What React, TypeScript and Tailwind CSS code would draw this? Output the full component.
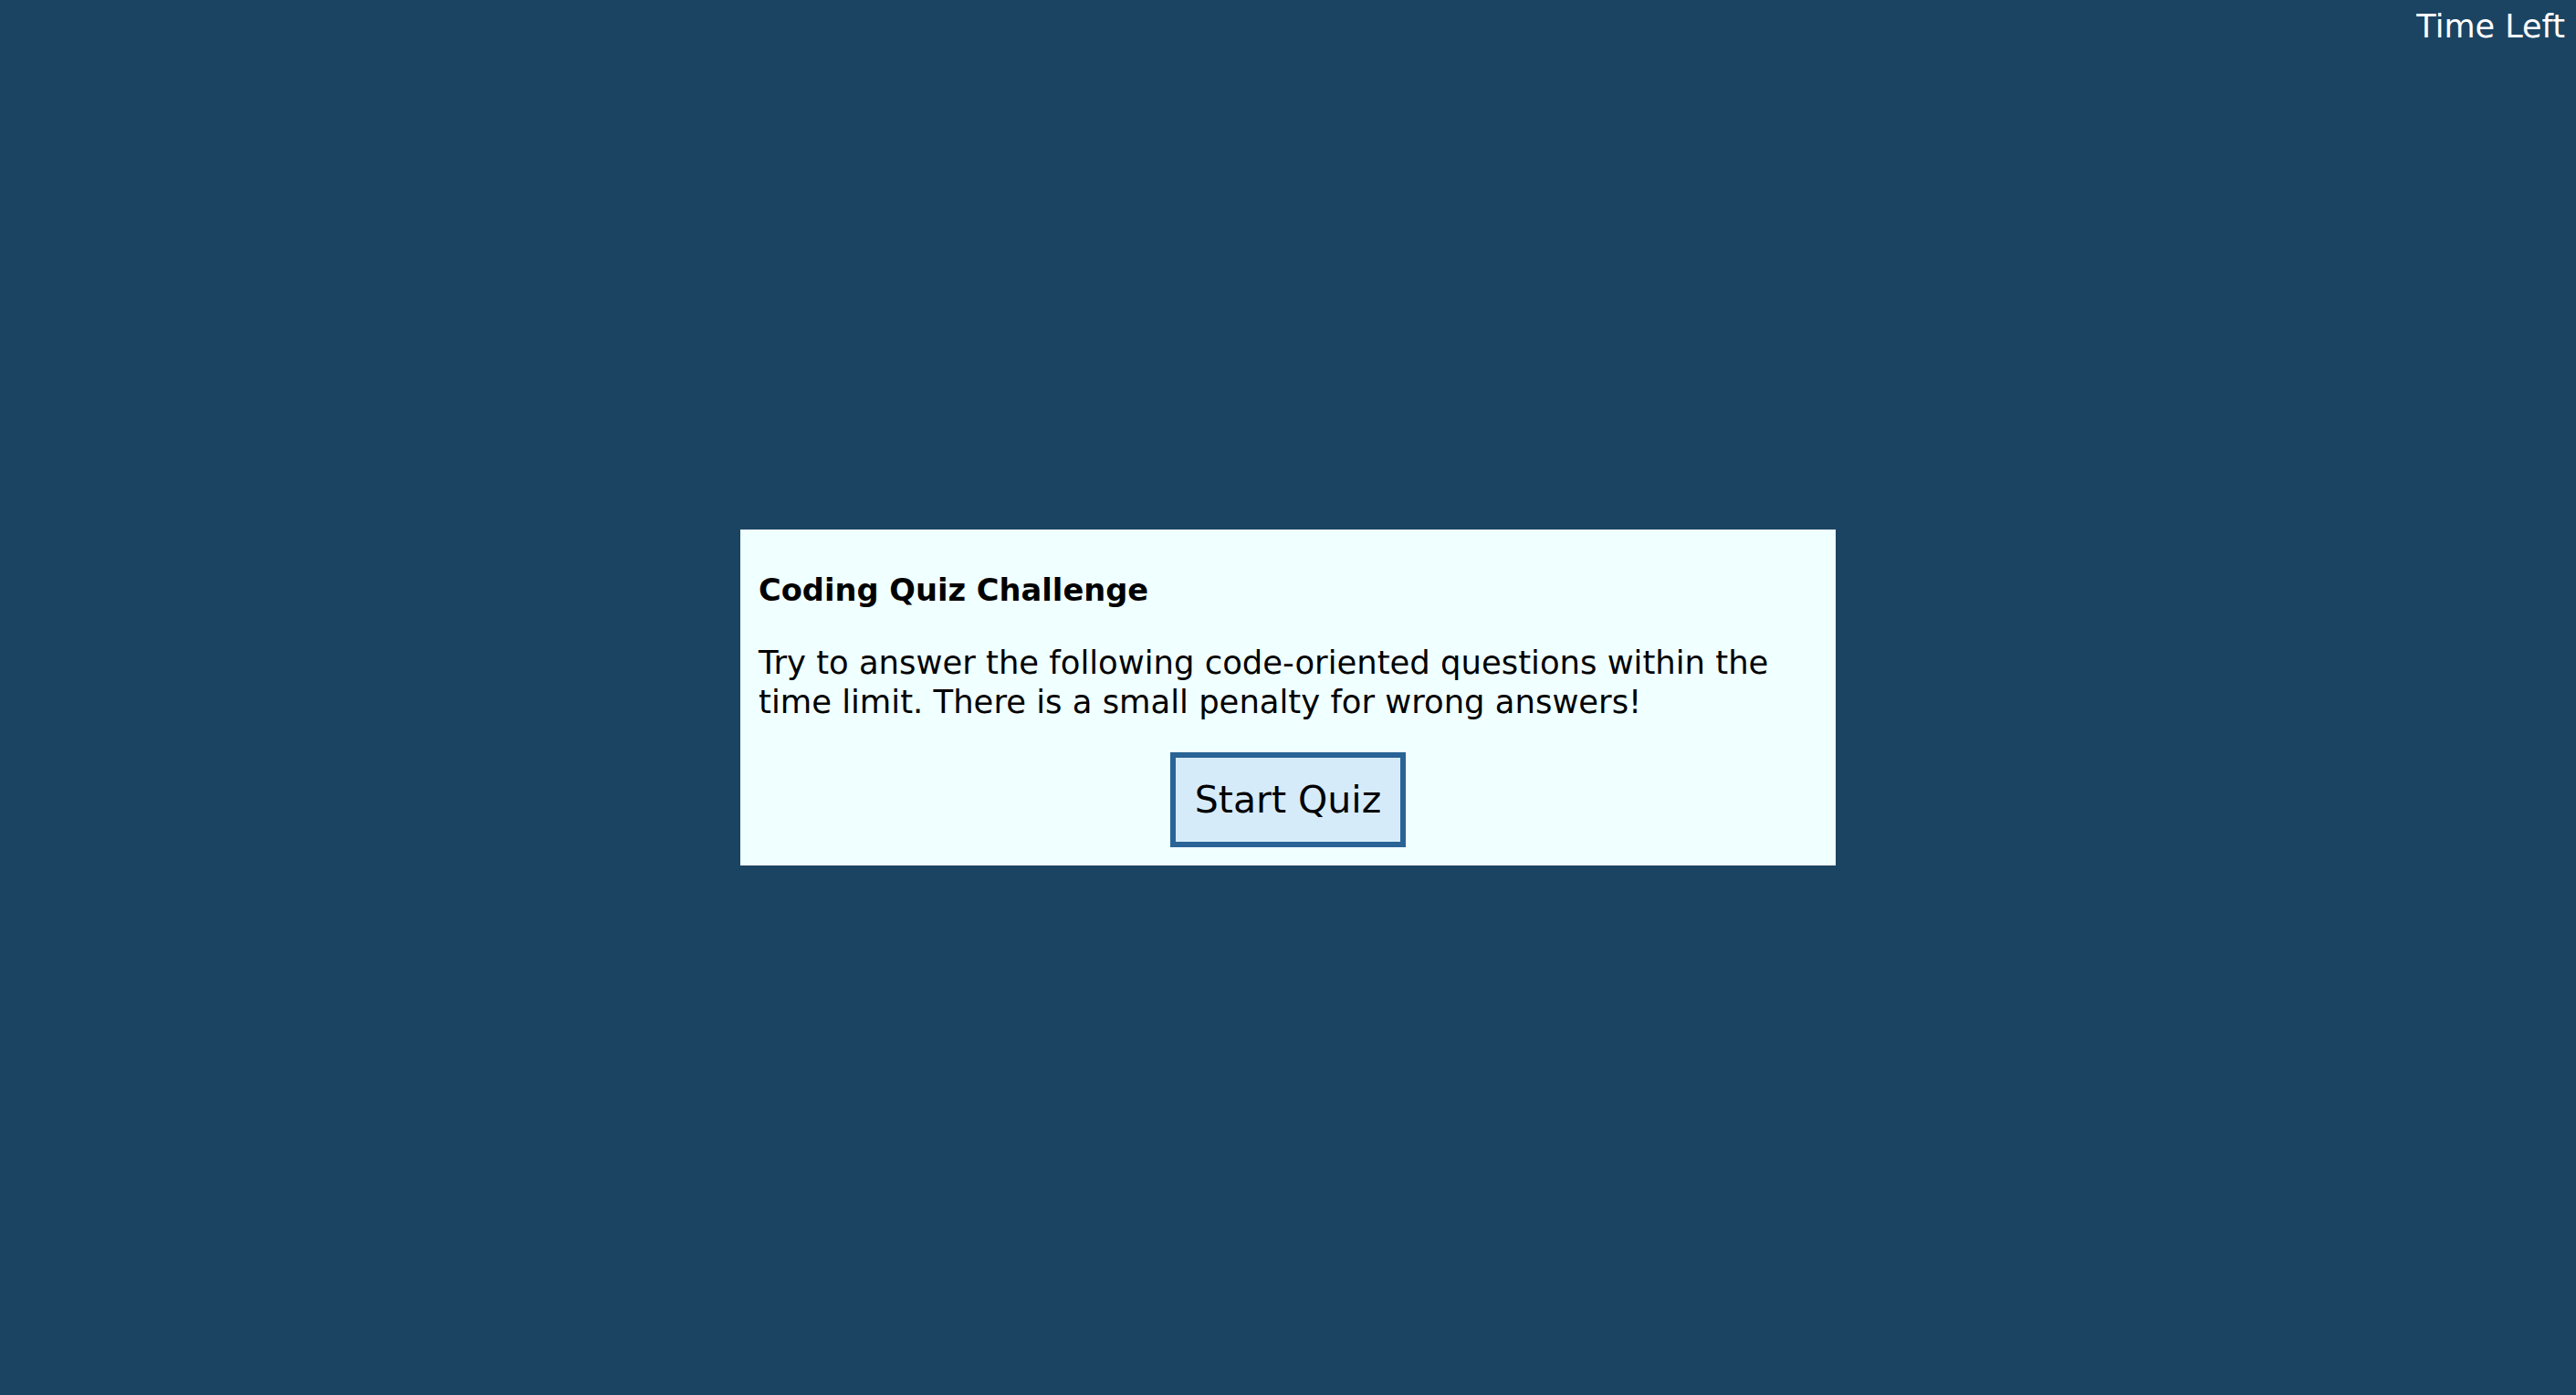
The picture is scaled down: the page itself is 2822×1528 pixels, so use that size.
const App = () => {
  return (
    <div className="flex min-h-screen flex-col bg-[#1b4463] font-['DejaVu_Sans',sans-serif]">
      <header className="flex h-[60px] justify-end pr-[12px] pt-[9px]">
        <span className="text-[35px] leading-[41px] text-white">Time Left</span>
      </header>

      <main className="flex flex-1 items-center justify-center">
        <section className="flex w-[1200px] flex-col bg-[#f0ffff] px-5 pb-5 pt-5 text-black">
          <h1 className="mt-[28px] text-[33.7px] font-bold leading-[38px]">
            Coding Quiz Challenge
          </h1>
          <p className="mt-[38px] text-[35.4px] leading-[43px]">
            Try to answer the following code-oriented questions within the time
            limit. There is a small penalty for wrong answers!
          </p>
          <div className="mt-[34px] flex justify-center">
            <button className="border-[6px] border-[#2a6496] bg-[#d6ebfa] px-[21px] py-[22px] text-[41px] leading-[48px] text-black">
              Start Quiz
            </button>
          </div>
        </section>
      </main>

      <div className="h-[60px]" />
    </div>
  );
};

export default App;
